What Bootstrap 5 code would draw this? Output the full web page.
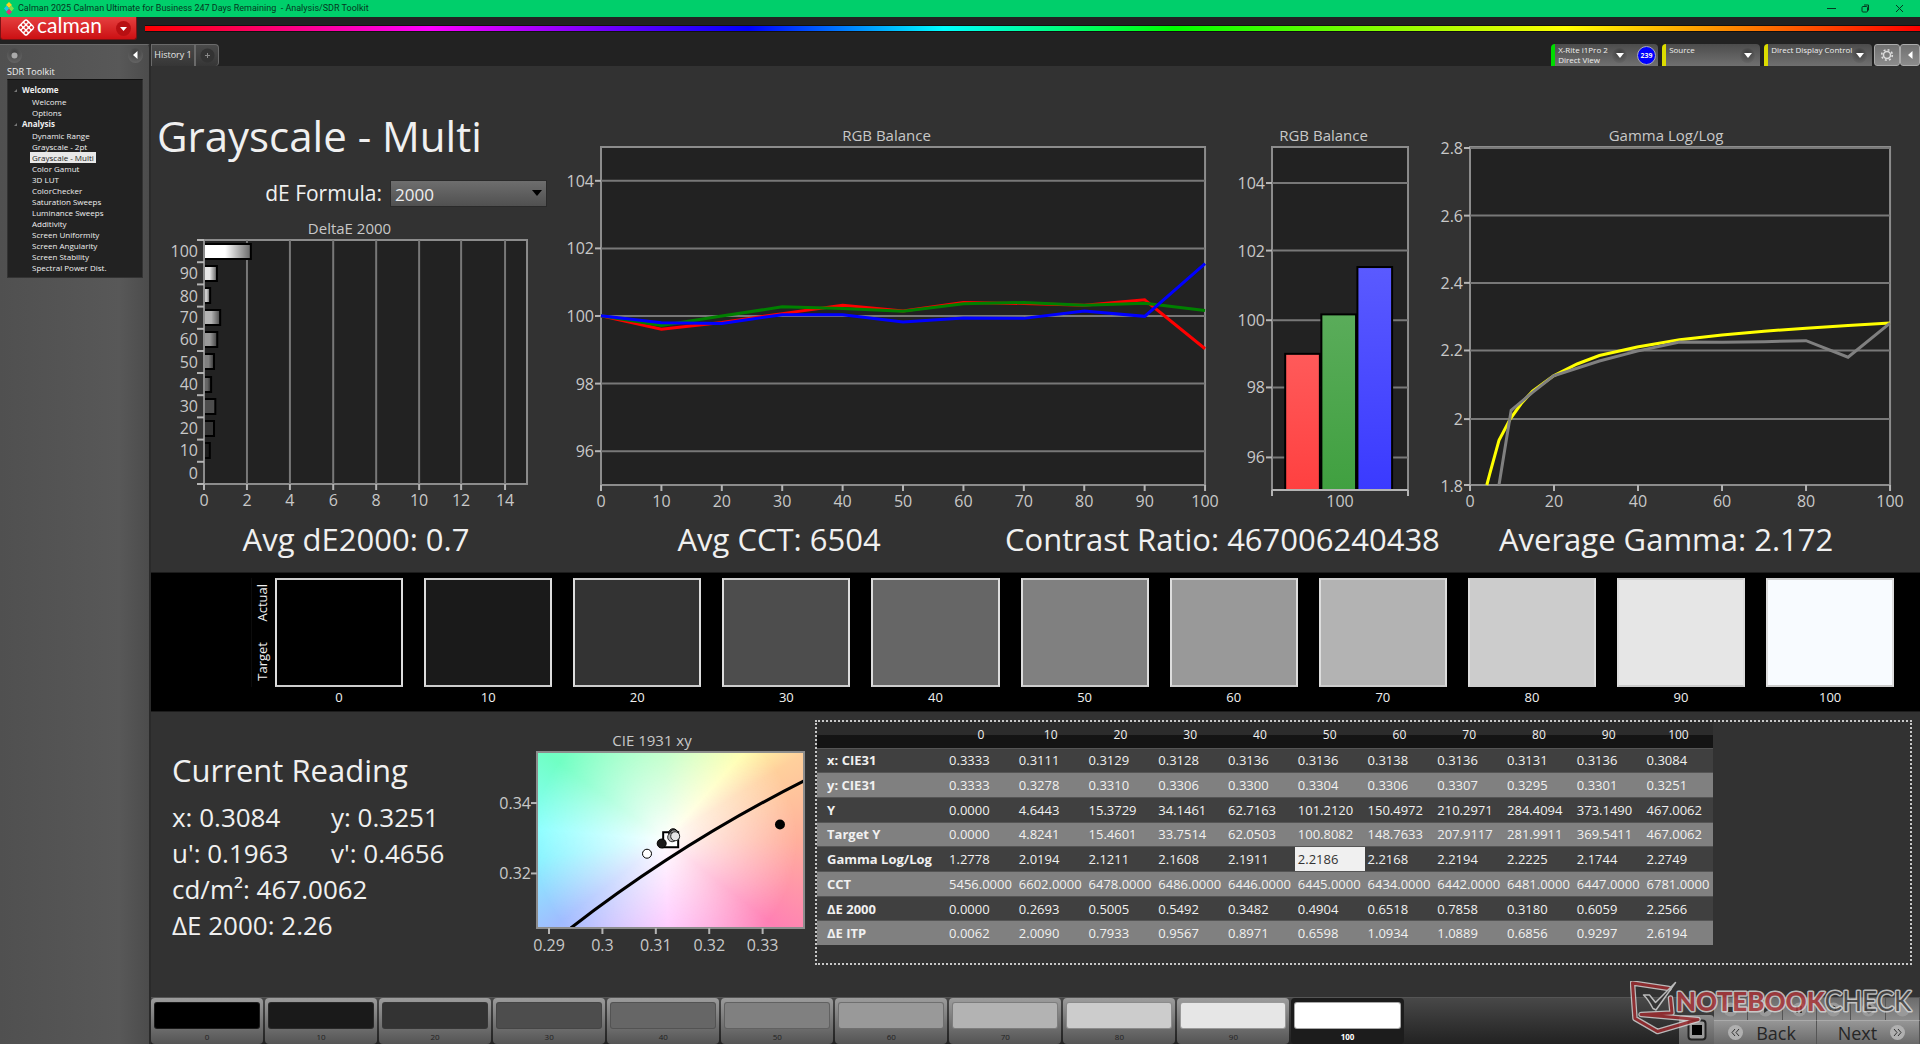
<!DOCTYPE html>
<html lang="en">
<head>
<meta charset="utf-8">
<meta name="viewport" content="width=device-width, initial-scale=1">
<title>Calman 2025 - Analysis/SDR Toolkit</title>
<link href="https://cdn.jsdelivr.net/npm/bootstrap@5.3.0/dist/css/bootstrap.min.css" rel="stylesheet">
<style>
  body{font-family:"Open Sans","Noto Sans",sans-serif;background:#222;color:#f0f0f0;font-size:13px;line-height:1.4}
  button{font-family:inherit}
  /* window frame */
  .win-bar{height:17px;background:#00cf6b;color:#06371f;font-family:Roboto,sans-serif;font-size:9px;line-height:17px}
  .win-bar button{border:0;background:none;padding:0;width:34px;height:17px;display:flex;align-items:center;justify-content:center}
  .top-strip{height:27px}
  .brand-btn{width:137px;height:23px;border:1px solid #7d1214;border-top:0;border-radius:0 0 3px 3px;background:linear-gradient(#e5403f,#cc1013);color:#fff;padding:0 5px 0 15px}
  .brand-btn svg{overflow:visible}
  .rainbow{height:7px;border:1px solid #111;border-width:1px 0;background:linear-gradient(90deg,#f00 0,#f0f 16%,#00f 34%,#0ff 45%,#0f0 58%,#ff0 80%,#f00 100%)}
  /* sidebar */
  .side{width:151px;background:linear-gradient(90deg,#505050,#585858 80%,#4c4c4c);border-right:2px solid #2a2a2a;border-top:1px solid #6a6a6a;border-radius:0 4px 0 0;padding:0 6px 0 7px}
  .side-top{height:20px}
  .side-name{font-size:9px;line-height:14px}
  .tree{background:#222;border:1px solid #333;border-top-color:#111;font-size:8px;padding:4px 0 4px;height:199px}
  .tree a{display:block;line-height:11px;color:#f0f0f0;text-decoration:none;width:max-content;margin-left:22px;padding:0 2px}
  .tree a.on{background:#e8e8e8;color:#222}
  .tree .grp{font-weight:700;line-height:12px;padding-left:5px}
  .round-btn{border:0;padding:0;width:15px;height:15px;border-radius:50%;background:radial-gradient(circle at 50% 30%,#3d3d3d,#6e6e6e);display:flex;align-items:center;justify-content:center}
  /* tab row */
  .tabs-row{height:22px;font-size:9px}
  .tab-btn{height:22px;border:1px solid #6a6a6a;border-bottom:0;background:linear-gradient(#4a4a4a,#363636);color:#e6e6e6;padding:0;font-size:9px}
  .dev{height:22px;border:0;border-left:4px solid #dcdc00;border-radius:4px 4px 0 0;background:linear-gradient(#4c4c4c,#707070);color:#f0f0f0;font-size:8px;line-height:10px;text-align:left;padding:1px 5px 1px 3px}
  .dev.ok{border-left-color:#00dc00;padding-right:2px}
  .count{width:19px;height:19px;border-radius:50%;background:#00f;border:1px solid #aab;font-size:7px;font-weight:700;line-height:17px;text-align:center;margin-left:10px}
  .tool-btn{height:22px;border:1px solid #aaa;border-radius:3px;background:linear-gradient(#707070,#8c8c8c);padding:0;display:flex;align-items:center;justify-content:center}
  /* analysis canvas */
  .stage{background:#323232;min-width:0}
  .chart-grid{display:grid;grid-template-columns:414fr 665fr 200fr 490fr}
  .chart-grid>*,.stat-grid>*,.low-grid>*{min-width:0}
  .page-title{font-size:42px;line-height:48px;font-weight:400;padding-left:6px}
  .formula{font-size:21px;line-height:27px}
  .formula-select{width:157px;height:27px;border:1px solid #2a2a2a;border-radius:0;background:linear-gradient(#6e6e6e,#505050);color:#eee;font-size:17px;line-height:20px;padding:4px 4px 1px;appearance:none}
  .caret{position:absolute;right:5px;top:10px;pointer-events:none}
  .chart-name{font-size:15px;line-height:19px;height:21px;color:#c8c8c8;text-align:center;white-space:nowrap}
  .plot{display:block;width:100%;overflow:visible}
  .plot svg{overflow:visible}
  .plot text{font-size:16px;fill:#c8c8c8}
  .plot .bg{fill:#222;stroke:#8c8c8c;stroke-width:2}
  .plot .gl{stroke:#787878;stroke-width:2}
  .plot .tk{stroke:#b4b4b4;stroke-width:2}
  .plot .ends text{text-anchor:end}
  .plot .mids text{text-anchor:middle}
  .plot polyline{fill:none;stroke-width:3;vector-effect:non-scaling-stroke}
  .stat-grid{display:grid;grid-template-columns:410fr 436fr 442fr 481fr;font-size:31px;line-height:44px;text-align:center;white-space:nowrap;padding:27px 0 11px}
  /* swatches */
  .strip{background:#000;border-top:1px solid #1c1c1c;border-bottom:1px solid #1c1c1c;padding:5px 26px 0 100px;height:140px}
  .axis-side{width:24px;border-left:1px solid #0c0c0c;height:109px;padding:6px 0}
  .axis-side span{writing-mode:vertical-rl;transform:rotate(180deg);font-size:13px;line-height:20px}
  .chip{height:109px;border:2px solid #ddd;border-color:#ccc #ddd}
  .chip-no{line-height:20px;text-align:center}
  /* readings */
  .low-grid{display:grid;grid-template-columns:349fr 304fr 1116fr}
  .reading{font-size:26px;line-height:36px;padding:36px 0 0 21px}
  .reading h2{font-size:31px;line-height:44px;font-weight:400;margin:0 0 7px}
  .pair{display:grid;grid-template-columns:159px 1fr}
  .cie{background:radial-gradient(circle at 48% 50%,#fff 0,rgba(255,255,255,.7) 22%,rgba(255,255,255,0) 80%),conic-gradient(from 0deg at 48% 50%,#a8ffb4 0deg,#ffffa8 42deg,#ffd09c 58deg,#ffb09c 90deg,#ff80b4 128deg,#ffb4ff 178deg,#a0bcff 232deg,#88f4ff 262deg,#8cffff 275deg,#70ffc4 306deg,#a8ffb4 360deg)}
  .data-box{border:2px dotted #c8c8c8;height:245px}
  .data-tbl{width:82%;height:223px;table-layout:fixed;border-collapse:collapse;font-size:13px;line-height:18px;color:#f0f0f0;white-space:nowrap}
  .data-tbl thead{background:linear-gradient(#2c2c2c 48%,#141414 52%)}
  .data-tbl thead th{font-weight:400;text-align:center;height:26px;padding:0;font-size:12px}
  .data-tbl tbody tr{background:#404040;border-top:1px solid #555}
  .data-tbl tbody tr:nth-child(even){background:#808080}
  .data-tbl td{padding:0 0 0 3px}
  .data-tbl tbody th{padding:0 0 0 10px}
  .data-tbl td.sel{background:#f0f0f0;color:#333}
  /* pattern bar */
  .foot{height:47px;background:linear-gradient(#484848,#222);border-top:1px solid #555}
  .pats{flex:0 0 70.8%;gap:2px}
  .pat{flex:1 1 0;min-width:0;border:0;border-radius:4px;background:linear-gradient(#9c9c9c,#545454);padding:4px 3px 0;height:46px;font-size:8px;line-height:16px;color:#222}
  .pat i{display:block;height:27px;border-radius:3px;border:1px solid rgba(60,60,60,.45)}
  .pat.cur{background:#1c1c1c;color:#fff;font-weight:700}
  .stop-btn{width:35px;height:29px;border:0;border-radius:4px 4px 0 0;background:linear-gradient(#8c8c8c,#606060);padding:0}
  .nav-pad{width:206px}
  .mini{flex:1;height:22px;border:0;border-right:1px solid #555;background:linear-gradient(#6c6c6c,#8c8c8c);padding:0;display:flex;justify-content:center;align-items:center}
  .step{flex:1;height:24px;border:0;border-right:1px solid #555;border-top:1px solid #aaa;background:linear-gradient(#969696,#6a6a6a);color:#262626;font-size:18px;line-height:20px;font-weight:500;padding:0 14px;gap:13px}
  .wmark{position:absolute;right:3px;bottom:7px;pointer-events:none}
  .wmark text{font-family:Lato,sans-serif;font-size:26px;paint-order:stroke;stroke:#d8d8d8;stroke-width:3px;stroke-linejoin:round}
</style>
</head>
<body class="d-flex flex-column min-vh-100">

<header>
  <div class="win-bar d-flex align-items-center">
    <svg class="ms-1 me-1" width="10" height="13" viewBox="0 0 10 13"><path d="M5 0l3 3-3 3-3-3z" fill="#ffd21f"/><path d="M2.600 3.500L5 6.500 2.600 9.500 0 6.500z" fill="#19c8e6"/><path d="M7.400 3.500L10 6.500 7.400 9.500 5 6.500z" fill="#7fe04a"/><path d="M5 7l3 3-3 3-3-3z" fill="#d8327a"/></svg>
    <span class="text-nowrap">Calman 2025 Calman Ultimate for Business 247 Days Remaining &nbsp;- Analysis/SDR Toolkit</span>
    <div class="d-flex ms-auto me-1">
      <button aria-label="Minimize"><svg width="9" height="9"><path d="M0 4.500h9" stroke="#06371f"/></svg></button>
      <button aria-label="Restore"><svg width="9" height="9" fill="none" stroke="#06371f"><rect x="1" y="2.500" width="5.500" height="5.500" rx="1"/><path d="M3 1h4.500v5.500"/></svg></button>
      <button aria-label="Close"><svg width="9" height="9"><path d="M1 1l7 7M8 1l-7 7" stroke="#06371f"/></svg></button>
    </div>
  </div>
  <div class="top-strip d-flex align-items-start">
    <button class="brand-btn d-flex align-items-center justify-content-between flex-shrink-0 me-2" aria-label="Calman menu">
      <svg width="88" height="22" viewBox="0 0 88 22"><g transform="translate(10 10.500) rotate(45)"><rect x="-6.500" y="-6.500" width="13" height="13" rx="2.500" fill="#fff"/><g fill="#d82a2a"><circle cx="-3.800" cy="-3.800" r="1.400"/><circle cy="-3.800" r="1.400"/><circle cx="3.800" cy="-3.800" r="1.400"/><circle cx="-3.800" r="1.400"/><circle r="1.400"/><circle cx="3.800" r="1.400"/><circle cx="-3.800" cy="3.800" r="1.400"/><circle cy="3.800" r="1.400"/><circle cx="3.800" cy="3.800" r="1.400"/></g></g><text x="21" y="16" font-family="Lato" font-size="21" fill="#fff">calman</text></svg>
      <svg width="15" height="15" viewBox="0 0 15 15"><circle cx="7.500" cy="7.500" r="7.500" fill="#b80f12"/><path d="M4 6h7l-3.500 4z" fill="#fff"/></svg>
    </button>
    <div class="rainbow flex-grow-1 mt-2"></div>
  </div>
</header>

<div class="d-flex flex-grow-1">
  <aside class="side flex-shrink-0">
    <div class="side-top d-flex align-items-center justify-content-between">
      <button class="round-btn" aria-label="Record"><svg width="7" height="7"><circle cx="3.500" cy="3.500" r="3" fill="#aaa"/></svg></button>
      <button class="round-btn" aria-label="Collapse"><svg width="7" height="8"><path d="M5.500 0v8L1 4z" fill="#fff"/></svg></button>
    </div>
    <div class="side-name">SDR Toolkit</div>
    <nav class="tree" aria-label="Workflow">
      <div class="grp"><svg class="me-1" width="5" height="5"><path d="M4 1v3H1z" fill="#777"/></svg>Welcome</div>
      <a href="#">Welcome</a><a href="#">Options</a>
      <div class="grp"><svg class="me-1" width="5" height="5"><path d="M4 1v3H1z" fill="#777"/></svg>Analysis</div>
      <a href="#">Dynamic Range</a><a href="#">Grayscale - 2pt</a><a href="#" class="on">Grayscale - Multi</a><a href="#">Color Gamut</a><a href="#">3D LUT</a><a href="#">ColorChecker</a><a href="#">Saturation Sweeps</a><a href="#">Luminance Sweeps</a><a href="#">Additivity</a><a href="#">Screen Uniformity</a><a href="#">Screen Angularity</a><a href="#">Screen Stability</a><a href="#">Spectral Power Dist.</a>
    </nav>
  </aside>

  <div class="d-flex flex-column flex-grow-1" style="min-width:0">
    <div class="tabs-row d-flex">
      <button class="tab-btn" style="width:44px">History 1</button>
      <button class="tab-btn rounded-end-1" style="width:24px" aria-label="Add history"><svg width="15" height="15"><circle cx="7.500" cy="7.500" r="7" fill="#333"/><path d="M7.500 5v5M5 7.500h5" stroke="#888"/></svg></button>
      <div class="d-flex gap-1 ms-auto">
        <div class="dev ok d-flex align-items-center" style="width:107px">
          <span class="flex-grow-1">X-Rite i1Pro 2<br>Direct View</span>
          <button class="round-btn" aria-label="Meter menu"><svg width="8" height="5"><path d="M0 0h8L4 5z" fill="#fff"/></svg></button>
          <span class="count">239</span>
        </div>
        <button class="dev d-flex justify-content-between" style="width:98px">Source<span class="round-btn align-self-center"><svg width="8" height="5"><path d="M0 0h8L4 5z" fill="#fff"/></svg></span></button>
        <button class="dev d-flex justify-content-between text-nowrap" style="width:108px">Direct Display Control<span class="round-btn align-self-center flex-shrink-0"><svg width="8" height="5"><path d="M0 0h8L4 5z" fill="#fff"/></svg></span></button>
      </div>
      <div class="d-flex" style="padding-left:2px">
        <button class="tool-btn" style="width:26px" aria-label="Settings"><svg width="14" height="14" viewBox="0 0 14 14" fill="none" stroke="#ddd"><circle cx="7" cy="7" r="3.500" stroke-width="1.500"/><circle cx="7" cy="7" r="5.300" stroke-width="1.600" stroke-dasharray="2 2.160"/></svg></button>
        <button class="tool-btn" style="width:20px" aria-label="Collapse panel"><svg width="7" height="8"><path d="M5.500 0v8L1 4z" fill="#fff"/></svg></button>
      </div>
    </div>

    <main class="stage d-flex flex-column flex-grow-1">
      <section class="chart-grid">
        <div style="padding-top:46px">
          <h1 class="page-title mb-0 text-nowrap">Grayscale - Multi</h1>
          <div class="formula d-flex justify-content-end gap-2" style="padding:0 18px 0 0;margin-top:20px">
            <label for="de">dE Formula:</label>
            <div class="position-relative">
              <select id="de" class="formula-select"><option>2000</option></select>
              <svg class="caret" width="10" height="7"><path d="M0 0h10L5 6z" fill="#000"/></svg>
            </div>
          </div>
          <div style="padding:12px 38px 0 21px">
            <div class="chart-name">DeltaE 2000</div>
            <div style="padding-left:32px">
              <svg class="plot" height="244">
                <defs><linearGradient id="sh"><stop offset=".45" stop-color="#000" stop-opacity="0"/><stop offset="1" stop-color="#000" stop-opacity=".6"/></linearGradient></defs>
                <rect class="bg" width="100%" height="100%"/>
                <g class="gl"><line x1="13.300%" x2="13.300%" y2="100%"/><line x1="26.600%" x2="26.600%" y2="100%"/><line x1="40%" x2="40%" y2="100%"/><line x1="53.300%" x2="53.300%" y2="100%"/><line x1="66.600%" x2="66.600%" y2="100%"/><line x1="79.600%" x2="79.600%" y2="100%"/><line x1="93.200%" x2="93.200%" y2="100%"/></g>
                <g stroke="#000" stroke-width="2">
                  <rect y="4" width="14.500%" height="15" fill="#fff"/><rect y="26" width="4%" height="15" fill="#e6e6e6"/><rect y="48" width="1.900%" height="15" fill="#ccc"/><rect y="70" width="5%" height="15" fill="#b3b3b3"/><rect y="92" width="4.100%" height="15" fill="#999"/><rect y="114" width="3.100%" height="15" fill="#808080"/><rect y="137" width="2.200%" height="15" fill="#666"/><rect y="159" width="3.500%" height="15" fill="#4d4d4d"/><rect y="181" width="3.100%" height="15" fill="#333"/><rect y="203" width="1.800%" height="15" fill="#1a1a1a"/>
                </g>
                <g fill="url(#sh)">
                  <rect y="4" width="14.500%" height="15"/><rect y="26" width="4%" height="15"/><rect y="48" width="1.900%" height="15"/><rect y="70" width="5%" height="15"/><rect y="92" width="4.100%" height="15"/><rect y="114" width="3.100%" height="15"/><rect y="137" width="2.200%" height="15"/>
                </g>
                <line y2="100%" stroke="#8c8c8c" stroke-width="2"/>
                <g class="tk"><line x1="-7" y1="0" y2="0"/><line x1="-7" y1="9.100%" y2="9.100%"/><line x1="-7" y1="18.200%" y2="18.200%"/><line x1="-7" y1="27.300%" y2="27.300%"/><line x1="-7" y1="36.400%" y2="36.400%"/><line x1="-7" y1="45.500%" y2="45.500%"/><line x1="-7" y1="54.500%" y2="54.500%"/><line x1="-7" y1="63.600%" y2="63.600%"/><line x1="-7" y1="72.700%" y2="72.700%"/><line x1="-7" y1="81.800%" y2="81.800%"/><line x1="-7" y1="90.900%" y2="90.900%"/><line x1="-7" y1="100%" y2="100%"/></g>
                <g class="ends"><text x="-6" y="5%" dy="5">100</text><text x="-6" y="14%" dy="5">90</text><text x="-6" y="23.300%" dy="5">80</text><text x="-6" y="32%" dy="5">70</text><text x="-6" y="41%" dy="5">60</text><text x="-6" y="50.300%" dy="5">50</text><text x="-6" y="59.300%" dy="5">40</text><text x="-6" y="68.300%" dy="5">30</text><text x="-6" y="77.600%" dy="5">20</text><text x="-6" y="86.600%" dy="5">10</text><text x="-6" y="95.800%" dy="5">0</text></g>
                <svg y="100%"><g class="tk"><line y2="6"/><line x1="13.300%" x2="13.300%" y2="6"/><line x1="26.600%" x2="26.600%" y2="6"/><line x1="40%" x2="40%" y2="6"/><line x1="53.300%" x2="53.300%" y2="6"/><line x1="66.600%" x2="66.600%" y2="6"/><line x1="79.600%" x2="79.600%" y2="6"/><line x1="93.200%" x2="93.200%" y2="6"/></g>
                <g class="mids"><text y="22">0</text><text x="13.300%" y="22">2</text><text x="26.600%" y="22">4</text><text x="40%" y="22">6</text><text x="53.300%" y="22">8</text><text x="66.600%" y="22">10</text><text x="79.600%" y="22">12</text><text x="93.200%" y="22">14</text></g></svg>
              </svg>
            </div>
          </div>
        </div>

        <div style="padding:60px 25px 0 3px">
          <div class="chart-name">RGB Balance</div>
          <div style="padding-left:33px">
            <svg class="plot" height="338">
              <rect class="bg" width="100%" height="100%"/>
              <g class="gl"><line y1="10%" x2="100%" y2="10%"/><line y1="30%" x2="100%" y2="30%"/><line y1="50%" x2="100%" y2="50%"/><line y1="70%" x2="100%" y2="70%"/><line y1="90%" x2="100%" y2="90%"/></g>
              <g class="tk"><line x1="-6" y1="10%" y2="10%"/><line x1="-6" y1="30%" y2="30%"/><line x1="-6" y1="50%" y2="50%"/><line x1="-6" y1="70%" y2="70%"/><line x1="-6" y1="90%" y2="90%"/></g>
              <g class="ends"><text x="-7" y="10%" dy="6">104</text><text x="-7" y="30%" dy="6">102</text><text x="-7" y="50%" dy="6">100</text><text x="-7" y="70%" dy="6">98</text><text x="-7" y="90%" dy="6">96</text></g>
              <svg viewBox="0 0 100 100" preserveAspectRatio="none">
                <polyline stroke="red" points="0,49.900 10,53.900 20,51.900 30,49.300 40,46.800 50,48.500 60,46 70,46.300 80,46.800 90,45.200 100,59.700"/>
                <polyline stroke="green" points="0,49.900 10,52.800 20,50 30,47.300 40,47.800 50,48.600 60,46.400 70,46 80,46.800 90,46.200 100,48.400"/>
                <polyline stroke="blue" points="0,49.900 10,52 20,52.200 30,49.600 40,49.600 50,51.800 60,50.600 70,50.700 80,48.500 90,50.100 100,34.500"/>
              </svg>
              <svg y="100%"><g class="tk"><line y2="6"/><line x1="10%" x2="10%" y2="6"/><line x1="20%" x2="20%" y2="6"/><line x1="30%" x2="30%" y2="6"/><line x1="40%" x2="40%" y2="6"/><line x1="50%" x2="50%" y2="6"/><line x1="60%" x2="60%" y2="6"/><line x1="70%" x2="70%" y2="6"/><line x1="80%" x2="80%" y2="6"/><line x1="90%" x2="90%" y2="6"/><line x1="100%" x2="100%" y2="6"/></g>
              <g class="mids"><text y="22">0</text><text x="10%" y="22">10</text><text x="20%" y="22">20</text><text x="30%" y="22">30</text><text x="40%" y="22">40</text><text x="50%" y="22">50</text><text x="60%" y="22">60</text><text x="70%" y="22">70</text><text x="80%" y="22">80</text><text x="90%" y="22">90</text><text x="100%" y="22">100</text></g></svg>
            </svg>
          </div>
        </div>

        <div style="padding:60px 22px 0 9px">
          <div class="chart-name">RGB Balance</div>
          <div style="padding-left:33px">
            <svg class="plot" height="343">
              <defs><linearGradient id="r" x2="0" y2="1"><stop stop-color="#ff5a5a"/><stop offset="1" stop-color="#ff4040"/></linearGradient><linearGradient id="g" x2="0" y2="1"><stop stop-color="#5aac5a"/><stop offset="1" stop-color="#40a040"/></linearGradient><linearGradient id="b" x2="0" y2="1"><stop stop-color="#5a5aff"/><stop offset="1" stop-color="#3a3aff"/></linearGradient></defs>
              <rect class="bg" width="100%" height="100%"/>
              <g class="gl"><line y1="10.500%" x2="100%" y2="10.500%"/><line y1="30.200%" x2="100%" y2="30.200%"/><line y1="50.500%" x2="100%" y2="50.500%"/><line y1="70.100%" x2="100%" y2="70.100%"/><line y1="90.500%" x2="100%" y2="90.500%"/></g>
              <g stroke="#000" stroke-width="2"><rect x="9.700%" y="60.300%" width="25.500%" height="39.700%" fill="url(#r)"/><rect x="36.300%" y="48.800%" width="25.500%" height="51.200%" fill="url(#g)"/><rect x="62.800%" y="35%" width="25.500%" height="65%" fill="url(#b)"/></g>
              <g class="tk"><line x1="-6" y1="10.500%" y2="10.500%"/><line x1="-6" y1="30.200%" y2="30.200%"/><line x1="-6" y1="50.500%" y2="50.500%"/><line x1="-6" y1="70.100%" y2="70.100%"/><line x1="-6" y1="90.500%" y2="90.500%"/></g>
              <g class="ends"><text x="-7" y="10.500%" dy="6">104</text><text x="-7" y="30.200%" dy="6">102</text><text x="-7" y="50.500%" dy="6">100</text><text x="-7" y="70.100%" dy="6">98</text><text x="-7" y="90.500%" dy="6">96</text></g>
              <svg y="100%"><g class="tk"><line x2="100%"/><line y2="6"/><line x1="100%" x2="100%" y2="6"/></g><g class="mids"><text x="50%" y="17">100</text></g></svg>
            </svg>
          </div>
        </div>

        <div style="padding:60px 30px 0 12px">
          <div class="chart-name">Gamma Log/Log</div>
          <div style="padding-left:28px">
            <svg class="plot" height="338">
              <rect class="bg" width="100%" height="100%"/>
              <g class="gl"><line y1="1" x2="100%" y2="1"/><line y1="20.300%" x2="100%" y2="20.300%"/><line y1="40.200%" x2="100%" y2="40.200%"/><line y1="60.200%" x2="100%" y2="60.200%"/><line y1="80.500%" x2="100%" y2="80.500%"/></g>
              <g class="tk"><line x1="-6" y1="1" y2="1"/><line x1="-6" y1="20.300%" y2="20.300%"/><line x1="-6" y1="40.200%" y2="40.200%"/><line x1="-6" y1="60.200%" y2="60.200%"/><line x1="-6" y1="80.500%" y2="80.500%"/><line x1="-6" y1="100%" y2="100%"/></g>
              <g class="ends"><text x="-7" y="1" dy="6">2.8</text><text x="-7" y="20.300%" dy="6">2.6</text><text x="-7" y="40.200%" dy="6">2.4</text><text x="-7" y="60.200%" dy="6">2.2</text><text x="-7" y="80.500%" dy="6">2</text><text x="-7" y="100%" dy="7">1.8</text></g>
              <svg viewBox="0 0 100 100" preserveAspectRatio="none">
                <polyline stroke="#ff0" points="4,100 4.700,96.700 6.900,86.800 9.600,80.400 12.200,75.900 14.900,72.200 19.900,67.700 25.500,64.200 30.800,61.700 39.800,59.200 49.900,57 60,55.600 70,54.500 80,53.600 90,52.800 100,52.100"/>
                <polyline stroke="#808080" points="6.900,100 9.800,77.900 14.900,72.600 19.900,67.700 30.800,63.300 39.800,60.400 49.900,57.700 60,57.800 70,57.600 80,57.300 90,62.200 100,52.100"/>
              </svg>
              <svg y="100%"><g class="tk"><line y2="6"/><line x1="20%" x2="20%" y2="6"/><line x1="40%" x2="40%" y2="6"/><line x1="60%" x2="60%" y2="6"/><line x1="80%" x2="80%" y2="6"/><line x1="100%" x2="100%" y2="6"/></g>
              <g class="mids"><text y="22">0</text><text x="20%" y="22">20</text><text x="40%" y="22">40</text><text x="60%" y="22">60</text><text x="80%" y="22">80</text><text x="100%" y="22">100</text></g></svg>
            </svg>
          </div>
        </div>
      </section>

      <section class="stat-grid">
        <div>Avg dE2000: 0.7</div>
        <div>Avg CCT: 6504</div>
        <div class="text-start overflow-hidden" style="padding-left:8px">Contrast Ratio: 467006240438</div>
        <div style="padding-right:27px">Average Gamma: 2.172</div>
      </section>

      <section class="strip d-flex">
        <div class="axis-side d-flex flex-column justify-content-between align-items-start"><span>Actual</span><span>Target</span></div>
        <div class="d-flex flex-grow-1" style="gap:21px">
          <div class="flex-fill w-100"><div class="chip" style="background:#000"></div><div class="chip-no">0</div></div>
          <div class="flex-fill w-100"><div class="chip" style="background:#1a1a1a"></div><div class="chip-no">10</div></div>
          <div class="flex-fill w-100"><div class="chip" style="background:#333"></div><div class="chip-no">20</div></div>
          <div class="flex-fill w-100"><div class="chip" style="background:#4d4d4d"></div><div class="chip-no">30</div></div>
          <div class="flex-fill w-100"><div class="chip" style="background:#666"></div><div class="chip-no">40</div></div>
          <div class="flex-fill w-100"><div class="chip" style="background:#808080"></div><div class="chip-no">50</div></div>
          <div class="flex-fill w-100"><div class="chip" style="background:#999"></div><div class="chip-no">60</div></div>
          <div class="flex-fill w-100"><div class="chip" style="background:#b3b3b3"></div><div class="chip-no">70</div></div>
          <div class="flex-fill w-100"><div class="chip" style="background:#ccc"></div><div class="chip-no">80</div></div>
          <div class="flex-fill w-100"><div class="chip" style="background:#e6e6e6"></div><div class="chip-no">90</div></div>
          <div class="flex-fill w-100"><div class="chip" style="background:#f8fbff"></div><div class="chip-no">100</div></div>
        </div>
      </section>

      <section class="low-grid flex-grow-1">
        <div class="reading text-nowrap">
          <h2>Current Reading</h2>
          <div class="pair"><span>x: 0.3084</span><span>y: 0.3251</span></div>
          <div class="pair"><span>u': 0.1963</span><span>v': 0.4656</span></div>
          <div>cd/m²: 467.0062</div>
          <div>ΔE 2000: 2.26</div>
        </div>
        <div style="padding-top:19px">
          <div class="chart-name">CIE 1931 xy</div>
          <div style="padding-left:37px">
            <svg class="plot cie" height="176">
              <svg viewBox="0 0 616 530" preserveAspectRatio="none"><path d="M78 530Q330 275 616 87" fill="none" stroke="#000" stroke-width="3" vector-effect="non-scaling-stroke"/></svg>
              <rect width="100%" height="100%" fill="none" stroke="#8c8c8c" stroke-width="2"/>
              <svg x="51%" y="49%"><rect x="-10" y="-6" width="15" height="15" fill="#fff" stroke="#000" stroke-width="2"/><circle cy="-5" r="4.500" fill="#555" stroke="#000"/><circle cx="1" cy="-4" r="4.500" fill="#999" stroke="#000"/><circle cx="-1" cy="-1" r="4.500" fill="#bbb" stroke="#333"/><circle cx="2" cy="-2" r="4.500" fill="#e6e6e6" stroke="#222"/></svg>
              <circle cx="46.700%" cy="52%" r="4.500" fill="#1a1a1a" stroke="#000"/>
              <circle cx="91%" cy="41.200%" r="5" fill="#000"/>
              <circle cx="41.200%" cy="57.800%" r="4.500" fill="#fff" stroke="#000"/>
              <g class="tk"><line x1="-6" y1="29%" y2="29%"/><line x1="-6" y1="69%" y2="69%"/></g>
              <g class="ends"><text x="-6" y="29%" dy="6">0.34</text><text x="-6" y="69%" dy="6">0.32</text></g>
              <svg y="100%"><g class="tk"><line x1="4.500%" x2="4.500%" y2="6"/><line x1="24.500%" x2="24.500%" y2="6"/><line x1="44.500%" x2="44.500%" y2="6"/><line x1="64.500%" x2="64.500%" y2="6"/><line x1="84.500%" x2="84.500%" y2="6"/></g>
              <g class="mids"><text x="4.500%" y="23">0.29</text><text x="24.500%" y="23">0.3</text><text x="44.500%" y="23">0.31</text><text x="64.500%" y="23">0.32</text><text x="84.500%" y="23">0.33</text></g></svg>
            </svg>
          </div>
        </div>
        <div style="padding:8px 8px 0 11px">
          <div class="data-box">
            <table class="data-tbl">
              <colgroup><col style="width:129px"><col span="11"></colgroup>
              <thead><tr><th></th><th>0</th><th>10</th><th>20</th><th>30</th><th>40</th><th>50</th><th>60</th><th>70</th><th>80</th><th>90</th><th>100</th></tr></thead>
              <tbody>
                <tr><th>x: CIE31</th><td>0.3333</td><td>0.3111</td><td>0.3129</td><td>0.3128</td><td>0.3136</td><td>0.3136</td><td>0.3138</td><td>0.3136</td><td>0.3131</td><td>0.3136</td><td>0.3084</td></tr>
                <tr><th>y: CIE31</th><td>0.3333</td><td>0.3278</td><td>0.3310</td><td>0.3306</td><td>0.3300</td><td>0.3304</td><td>0.3306</td><td>0.3307</td><td>0.3295</td><td>0.3301</td><td>0.3251</td></tr>
                <tr><th>Y</th><td>0.0000</td><td>4.6443</td><td>15.3729</td><td>34.1461</td><td>62.7163</td><td>101.2120</td><td>150.4972</td><td>210.2971</td><td>284.4094</td><td>373.1490</td><td>467.0062</td></tr>
                <tr><th>Target Y</th><td>0.0000</td><td>4.8241</td><td>15.4601</td><td>33.7514</td><td>62.0503</td><td>100.8082</td><td>148.7633</td><td>207.9117</td><td>281.9911</td><td>369.5411</td><td>467.0062</td></tr>
                <tr><th>Gamma Log/Log</th><td>1.2778</td><td>2.0194</td><td>2.1211</td><td>2.1608</td><td>2.1911</td><td class="sel">2.2186</td><td>2.2168</td><td>2.2194</td><td>2.2225</td><td>2.1744</td><td>2.2749</td></tr>
                <tr><th>CCT</th><td>5456.0000</td><td>6602.0000</td><td>6478.0000</td><td>6486.0000</td><td>6446.0000</td><td>6445.0000</td><td>6434.0000</td><td>6442.0000</td><td>6481.0000</td><td>6447.0000</td><td>6781.0000</td></tr>
                <tr><th>ΔE 2000</th><td>0.0000</td><td>0.2693</td><td>0.5005</td><td>0.5492</td><td>0.3482</td><td>0.4904</td><td>0.6518</td><td>0.7858</td><td>0.3180</td><td>0.6059</td><td>2.2566</td></tr>
                <tr><th>ΔE ITP</th><td>0.0062</td><td>2.0090</td><td>0.7933</td><td>0.9567</td><td>0.8971</td><td>0.6598</td><td>1.0934</td><td>1.0889</td><td>0.6856</td><td>0.9297</td><td>2.6194</td></tr>
              </tbody>
            </table>
          </div>
        </div>
      </section>

      <footer class="foot d-flex position-relative">
        <div class="pats d-flex">
          <button class="pat"><i style="background:#000"></i>0</button>
          <button class="pat"><i style="background:#1a1a1a"></i>10</button>
          <button class="pat"><i style="background:#333"></i>20</button>
          <button class="pat"><i style="background:#4d4d4d"></i>30</button>
          <button class="pat"><i style="background:#666"></i>40</button>
          <button class="pat"><i style="background:#808080"></i>50</button>
          <button class="pat"><i style="background:#999"></i>60</button>
          <button class="pat"><i style="background:#b3b3b3"></i>70</button>
          <button class="pat"><i style="background:#ccc"></i>80</button>
          <button class="pat"><i style="background:#e6e6e6"></i>90</button>
          <button class="pat cur"><i style="background:#fff"></i>100</button>
        </div>
        <button class="stop-btn ms-auto align-self-end" aria-label="Stop"><svg width="20" height="22"><rect x="1.500" y="1.500" width="17" height="19" rx="3" fill="#999" stroke="#222" stroke-width="2"/><rect x="5" y="6" width="10" height="10" fill="#000"/></svg></button>
        <div class="nav-pad d-flex flex-column">
          <div class="d-flex">
            <button class="mini" aria-label="Stop reading"><svg width="15" height="15"><circle cx="7.500" cy="7.500" r="7" fill="#999"/><rect x="5" y="5" width="5" height="5" fill="#333"/></svg></button>
            <button class="mini" aria-label="Play"><svg width="15" height="15"><circle cx="7.500" cy="7.500" r="7" fill="#999"/><path d="M6 4l5 3.500L6 11z" fill="#333"/></svg></button>
            <button class="mini" aria-label="Pause"><svg width="15" height="15"><circle cx="7.500" cy="7.500" r="7" fill="#999"/><path d="M5 4v7M9 4v7" stroke="#333" stroke-width="2"/></svg></button>
            <button class="mini" aria-label="Loop"><svg width="15" height="15"><circle cx="7.500" cy="7.500" r="7" fill="#999"/><path d="M4 7a3 3 0 1 0 3-3" stroke="#333" fill="none"/></svg></button>
            <button class="mini" aria-label="Refresh"><svg width="15" height="15"><circle cx="7.500" cy="7.500" r="7" fill="#999"/><path d="M10 5a3 3 0 1 0 1 3" stroke="#333" fill="none" stroke-width="2"/></svg></button>
            <button class="mini" aria-label="More"><svg width="15" height="15"><circle cx="7.500" cy="7.500" r="7" fill="#999"/></svg></button>
          </div>
          <div class="d-flex">
            <button class="step d-flex align-items-center"><svg width="15" height="15" fill="none" stroke="#333"><circle cx="7.500" cy="7.500" r="7.500" fill="#b0b0b0" stroke="none"/><path d="M7 4L4 7.500 7 11M11 4L8 7.500 11 11"/></svg>Back</button>
            <button class="step d-flex align-items-center justify-content-end">Next<svg width="15" height="15" fill="none" stroke="#333"><circle cx="7.500" cy="7.500" r="7.500" fill="#b0b0b0" stroke="none"/><path d="M4 4l3 3.500L4 11M8 4l3 3.500L8 11"/></svg></button>
          </div>
        </div>
        <svg class="wmark" width="287" height="56" viewBox="0 0 287 56" opacity=".82">
          <g fill="none" stroke-linejoin="round" stroke-linecap="round"><path d="M39 7.500L2.500 2 5 37.500 27.500 50.500 68 38.500 11 33.500 42 32 40.500 17" stroke="#d8d8d8" stroke-width="5.500"/><path d="M39 7.500L2.500 2 5 37.500 27.500 50.500 68 38.500 11 33.500 42 32 40.500 17" stroke="#a02c30" stroke-width="3"/></g>
          <path d="M13.500 14h6L25.500 21.500 45.500 1.500 26 29 23 27.500Q18 18 13.500 14z" fill="#333" stroke="#d8d8d8" stroke-width="1.500" stroke-linejoin="round"/>
          <text x="46" y="30"><tspan font-weight="900" fill="#b03a3e">NOTEBOOK</tspan><tspan fill="#444">CHECK</tspan></text>
        </svg>
      </footer>
    </main>
  </div>
</div>
<script src="https://cdn.jsdelivr.net/npm/bootstrap@5.3.0/dist/js/bootstrap.bundle.min.js"></script>
</body>
</html>
